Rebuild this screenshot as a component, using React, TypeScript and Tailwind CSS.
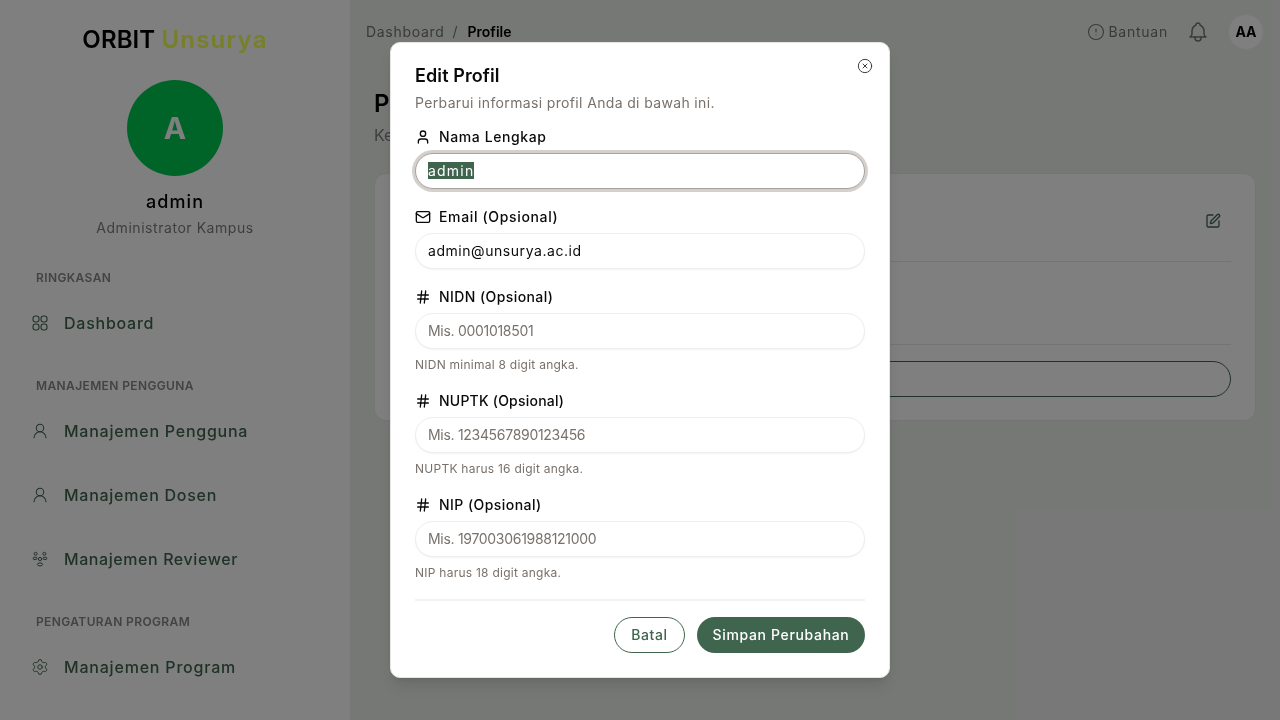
import { useEffect, useRef } from "react";
import { CircleAlert, CircleX, Hash, Mail, Settings, SquarePen, User, UserRound } from "lucide-react";
import { TbBell } from "react-icons/tb";

function DashboardIcon() {
  return (
    <svg viewBox="0 0 16 16" fill="none" stroke="currentColor" strokeWidth="1.1" className="size-4">
      <rect x="1" y="1" width="6" height="6" rx="2.4" />
      <rect x="9" y="1" width="6" height="6" rx="2.4" />
      <rect x="1" y="9" width="6" height="6" rx="2.4" />
      <rect x="9" y="9" width="6" height="6" rx="2.4" />
    </svg>
  );
}

function ReviewerIcon() {
  return (
    <svg viewBox="0 0 16 16" fill="none" stroke="currentColor" strokeWidth="1" className="size-4">
      <circle cx="3.6" cy="2.8" r="1.5" />
      <circle cx="12.4" cy="2.8" r="1.5" />
      <circle cx="8" cy="8" r="1.6" />
      <ellipse cx="3.1" cy="7.4" rx="2" ry="1.2" />
      <ellipse cx="12.9" cy="7.4" rx="2" ry="1.2" />
      <ellipse cx="8" cy="13.4" rx="2.6" ry="1.5" />
    </svg>
  );
}

function NavItem({ icon, label, tracking }: { icon: React.ReactNode; label: string; tracking: string }) {
  return (
    <div className={`flex h-16 items-center text-base font-medium text-[#40654e] ${tracking}`}>
      <span className="mr-[14px] ml-[30px] flex w-5 items-center justify-center">{icon}</span>
      <span>{label}</span>
    </div>
  );
}

function NavGroup({ title, children }: { title: string; children: React.ReactNode }) {
  return (
    <div className="mb-[23px]">
      <div className="mb-[5px] pl-9 text-xs leading-4 font-semibold tracking-[0.38px] text-[#8a8484] uppercase">{title}</div>
      {children}
    </div>
  );
}

function Field({
  icon,
  label,
  labelTracking,
  placeholder,
  value,
  hint,
}: {
  icon: React.ReactNode;
  label: string;
  labelTracking: string;
  placeholder?: string;
  value?: string;
  hint?: string;
}) {
  return (
    <div className="mb-[18px]">
      <label className={`mb-[6px] flex h-5 items-center gap-2 text-sm font-medium text-[#0c0a09] ${labelTracking}`}>
        {icon}
        {label}
      </label>
      <input
        readOnly
        value={value}
        placeholder={placeholder}
        className={`h-9 w-full rounded-full border border-[#eeeeee] bg-white px-3 pb-[2px] text-sm text-[#0c0a09] shadow-xs outline-none placeholder:text-[#79716b] ${
          value ? "tracking-[0.55px]" : "tracking-[-0.3px]"
        }`}
      />
      {hint && <p className="mt-2 text-xs leading-4 tracking-[0.25px] text-[#79716b]">{hint}</p>}
    </div>
  );
}

export default function App() {
  const nameRef = useRef<HTMLInputElement>(null);

  useEffect(() => {
    nameRef.current?.focus();
    nameRef.current?.select();
  }, []);

  return (
    <div className="flex h-[720px] overflow-hidden bg-[#edf0ed] will-change-transform [font-family:Inter,sans-serif]">
      {/* Sidebar */}
      <aside className="w-[350px] shrink-0 bg-white">
        <div className="flex flex-col items-center pt-6">
          <div className="text-2xl leading-8 font-semibold tracking-[0.1px] text-black">
            ORBIT <span className="tracking-[1.2px] text-[#eeff50]">Unsurya</span>
          </div>
          <div className="mt-6 flex size-24 items-center justify-center rounded-full bg-[#00c853] text-3xl font-bold text-white">
            A
          </div>
          <div className="mt-3 text-lg leading-7 font-medium tracking-[1.1px] text-black">admin</div>
          <div className="mt-[2px] text-sm leading-5 tracking-[0.55px] text-[#7d7d7d]">Administrator Kampus</div>
        </div>
        <nav className="mt-8">
          <NavGroup title="Ringkasan">
            <NavItem tracking="tracking-[0.75px]" icon={<DashboardIcon />} label="Dashboard" />
          </NavGroup>
          <NavGroup title="Manajemen Pengguna">
            <NavItem tracking="tracking-[0.75px]" icon={<UserRound className="size-[18px]" strokeWidth={1.4} />} label="Manajemen Pengguna" />
            <NavItem tracking="tracking-[0.72px]" icon={<UserRound className="size-[18px]" strokeWidth={1.4} />} label="Manajemen Dosen" />
            <NavItem tracking="tracking-[0.58px]" icon={<ReviewerIcon />} label="Manajemen Reviewer" />
          </NavGroup>
          <NavGroup title="Pengaturan Program">
            <NavItem tracking="tracking-[0.8px]" icon={<Settings className="size-[18px]" strokeWidth={1.3} />} label="Manajemen Program" />
          </NavGroup>
        </nav>
      </aside>

      {/* Main */}
      <main className="flex-1">
        <header className="flex h-16 items-center justify-between px-4 text-sm">
          <div className="flex items-center gap-2">
            <span className="tracking-[0.7px] text-[#737373]">Dashboard</span>
            <span className="text-[#737373]">/</span>
            <span className="ml-[2px] font-semibold text-black">Profile</span>
          </div>
          <div className="flex items-center">
            <CircleAlert className="size-[18px] text-[#737373]" strokeWidth={1.5} />
            <span className="ml-[3px] tracking-[0.75px] text-[#737373]">Bantuan</span>
            <TbBell className="mx-[18px] size-6 text-[#737373]" strokeWidth={1.5} />
            <div className="flex size-9 items-center justify-center rounded-full border border-[#f0f0f0] bg-white font-bold text-black">
              AA
            </div>
          </div>
        </header>
        <div className="px-6 pt-6">
          <h1 className="text-2xl leading-8 font-semibold text-black">Profile</h1>
          <p className="mt-[3px] mb-[26px] text-base text-[#7d7d7d]">Kelola profil Anda</p>
          <div className="rounded-xl border border-[#e8e8e8] bg-white px-6 pt-6">
            <div className="flex h-[64px] items-start justify-end border-b border-[#e8e8e8] pt-[15px] pr-[10px]">
              <SquarePen className="size-4 text-[#40654e]" />
            </div>
            <div className="h-[83px] border-b border-[#e8e8e8]"></div>
            <div className="mt-4 mb-[23px] h-9 rounded-full border border-[#40654e]"></div>
          </div>
        </div>
      </main>

      {/* Dialog */}
      <div className="fixed inset-0 bg-black/50"></div>
      <div className="fixed top-[42px] left-[390px] w-[500px] rounded-[10px] border border-[#e7e5e4] bg-white p-6 shadow-lg">
        <button className="absolute top-[15px] right-[16px] text-[#3f3f3f]">
          <CircleX className="size-4" strokeWidth={1.5} />
        </button>
        <h2 className="text-lg leading-[18px] font-semibold tracking-[0.1px] text-[#0c0a09]">Edit Profil</h2>
        <p className="mt-2 mb-[14px] text-sm tracking-[0.35px] text-[#79716b]">Perbarui informasi profil Anda di bawah ini.</p>

        <div className="mb-[18px]">
          <label className="mb-[6px] flex h-5 items-center gap-2 text-sm font-medium tracking-[0.6px] text-[#0c0a09]">
            <User className="size-4" />
            Nama Lengkap
          </label>
          <input
            ref={nameRef}
            readOnly
            value="admin"
            className="h-9 w-full rounded-full border border-[#a8a29e] bg-white px-3 pb-[2px] text-sm tracking-[1.2px] text-[#0c0a09] ring-[3px] ring-[#a8a29e]/50 outline-none selection:bg-[#40654e] selection:text-white"
          />
        </div>
        <Field icon={<Mail className="size-4" />} label="Email (Opsional)" labelTracking="tracking-[0.65px]" value="admin@unsurya.ac.id" />
        <Field icon={<Hash className="size-4" />} label="NIDN (Opsional)" labelTracking="tracking-[0.42px]" placeholder="Mis. 0001018501" hint="NIDN minimal 8 digit angka." />
        <Field icon={<Hash className="size-4" />} label="NUPTK (Opsional)" labelTracking="tracking-[0.22px]" placeholder="Mis. 1234567890123456" hint="NUPTK harus 16 digit angka." />
        <Field icon={<Hash className="size-4" />} label="NIP (Opsional)" labelTracking="tracking-[0.45px]" placeholder="Mis. 197003061988121000" hint="NIP harus 18 digit angka." />

        <div className="flex justify-end gap-3 border-t-2 border-[#f2f2f2] pt-4">
          <button className="h-9 w-[71px] rounded-full border border-[#40654e] bg-white text-sm font-medium tracking-[0.6px] text-[#40654e]">
            Batal
          </button>
          <button className="h-9 w-[168px] rounded-full bg-[#40654e] text-sm font-medium tracking-[0.65px] text-white">
            Simpan Perubahan
          </button>
        </div>
      </div>
    </div>
  );
}
